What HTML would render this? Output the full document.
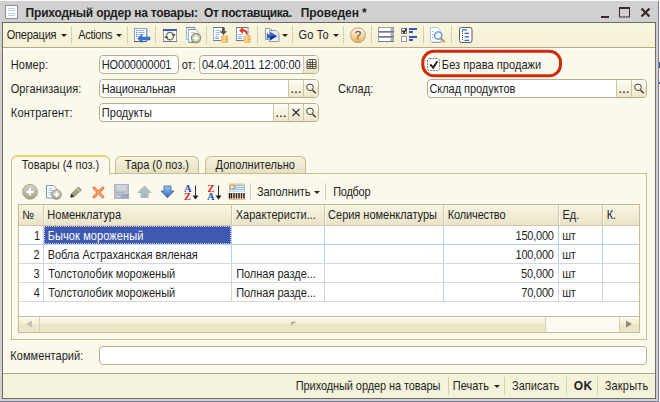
<!DOCTYPE html>
<html><head><meta charset="utf-8">
<style>
html,body{margin:0;padding:0;}
body{width:660px;height:402px;overflow:hidden;position:relative;background:#d0d0d0;font-family:"Liberation Sans",sans-serif;font-size:11px;color:#1e1e1e;}
.a{position:absolute;white-space:nowrap;}
.t{position:absolute;white-space:nowrap;line-height:14px;height:14px;transform-origin:0 11px;transform:scaleY(1.08);}
.inp{position:absolute;background:#fff;border:1px solid #b9ae8c;border-radius:4px;box-sizing:border-box;}
.btn{position:absolute;box-sizing:border-box;border-left:1px solid #cfc6a4;background:linear-gradient(#fffef6,#ece5c8);}
.tab{position:absolute;box-sizing:border-box;border:1px solid #c8bb8c;border-bottom:none;border-radius:6px 6px 0 0;background:linear-gradient(#f6f2dd,#e6e0c4);}
.vl{position:absolute;width:1px;background:#c8d4e4;}
.hl{position:absolute;height:1px;background:#d3d7de;}
.hv{position:absolute;width:1px;top:205px;height:20px;background:#cfc8aa;box-shadow:1px 0 0 #fbf9ee;}
</style></head><body>
<!-- title bar -->
<div class="a" style="left:0;top:0;width:660px;height:1px;background:#fafafa"></div>
<div class="a" style="left:0;top:401px;width:659px;height:1px;background:#7c7c9e"></div>
<div class="a" style="left:658px;top:1px;width:1px;height:401px;background:#7c7c9e"></div>
<div class="a" style="left:659px;top:0;width:1px;height:402px;background:#fbf9e8"></div>
<div class="a" style="left:659px;top:62px;width:1px;height:5px;background:#3a5ac0"></div><div class="a" style="left:659px;top:67px;width:1px;height:1px;background:#4a3c3c"></div><div class="a" style="left:659px;top:82px;width:1px;height:2px;background:#3a5ac0"></div>
<!-- window frame -->
<div class="a" style="left:2px;top:22px;width:654px;height:377px;background:#fbf9ec;border:1px solid #6e6a64;box-sizing:border-box"></div>
<!-- toolbar -->
<div class="a" style="left:3px;top:23px;width:652px;height:25px;background:linear-gradient(#f9f6df,#f5f1d6);border-bottom:1px solid #b4ac80;box-sizing:border-box"></div><div class="a" style="left:3px;top:48px;width:652px;height:2px;background:#fffffa"></div>
<!-- inputs -->
<div class="inp" style="left:99px;top:55px;width:80px;height:19px"></div>
<div class="inp" style="left:199px;top:55px;width:120px;height:19px"></div><div class="btn" style="left:303px;top:56px;width:15px;height:17px;border-radius:0 3px 3px 0"></div>
<div class="inp" style="left:99px;top:79px;width:220px;height:19px"></div><div class="btn" style="left:288px;top:80px;width:15px;height:17px"></div><div class="btn" style="left:303px;top:80px;width:15px;height:17px;border-radius:0 3px 3px 0"></div>
<div class="inp" style="left:99px;top:103px;width:220px;height:19px"></div><div class="btn" style="left:273px;top:104px;width:15px;height:17px"></div><div class="btn" style="left:288px;top:104px;width:15px;height:17px"></div><div class="btn" style="left:303px;top:104px;width:15px;height:17px;border-radius:0 3px 3px 0"></div>
<div class="inp" style="left:427px;top:79px;width:220px;height:19px"></div><div class="btn" style="left:616px;top:80px;width:15px;height:17px"></div><div class="btn" style="left:631px;top:80px;width:15px;height:17px;border-radius:0 3px 3px 0"></div>
<!-- tabs -->
<div class="a" style="left:11px;top:173px;width:636px;height:167px;border:1px solid #c8bb8c;box-sizing:border-box;background:#fbf9ec"></div>
<div class="tab" style="left:115px;top:156px;width:84px;height:17px"></div>
<div class="tab" style="left:205px;top:156px;width:101px;height:17px"></div>
<div class="tab" style="left:11px;top:155px;width:99px;height:19px;background:#fbf9ec;border-top:2px solid #efd070"></div>
<!-- table -->
<div class="a" style="left:18px;top:204px;width:622px;height:129px;border:1px solid #c8bb8c;box-sizing:border-box;background:#fff"></div>
<div class="a" style="left:19px;top:205px;width:620px;height:21px;background:linear-gradient(#f8f5e4,#e9e3c8);border-bottom:1px solid #cfc8aa;box-sizing:border-box"></div>
<div class="hv" style="left:43px"></div><div class="hv" style="left:231px"></div><div class="hv" style="left:324px"></div><div class="hv" style="left:443px"></div><div class="hv" style="left:558px"></div><div class="hv" style="left:602px"></div>
<div class="vl" style="left:43px;top:226px;height:76px;background:#ccd2dc"></div>
<div class="vl" style="left:231px;top:226px;height:76px;background:linear-gradient(#b4d0f0 0,#b4d0f0 37px,#cfd3da 38px,#cfd3da 100%)"></div>
<div class="vl" style="left:324px;top:226px;height:76px;background:linear-gradient(#b4d0f0 0,#b4d0f0 37px,#cfd3da 38px,#cfd3da 100%)"></div>
<div class="vl" style="left:443px;top:226px;height:76px;background:#b4d0f0"></div>
<div class="vl" style="left:558px;top:226px;height:76px;background:linear-gradient(#b4d0f0 0,#b4d0f0 37px,#cfd3da 38px,#cfd3da 100%)"></div>
<div class="vl" style="left:602px;top:226px;height:76px;background:linear-gradient(#b4d0f0 0,#b4d0f0 37px,#cfd3da 38px,#cfd3da 100%)"></div>
<div class="hl" style="left:19px;top:244px;width:620px;background:#b4cff0"></div>
<div class="hl" style="left:19px;top:263px;width:620px"></div>
<div class="hl" style="left:19px;top:282px;width:620px"></div>
<div class="hl" style="left:19px;top:301px;width:620px"></div>
<div class="a" style="left:44px;top:226px;width:187px;height:18px;background:#4059b0;outline:1px dotted #c8d4f0;outline-offset:-1px"></div>
<!-- scrollbar -->
<div class="a" style="left:19px;top:316px;width:620px;height:16px;background:#fbf9f1;border-top:1px solid #c4bc94;box-sizing:border-box"></div>
<div class="a" style="left:39px;top:317px;width:507px;height:15px;background:linear-gradient(#fdfbf6 0,#fdfbf6 2px,#f6f3da 2px,#f6f3da 6px,#ebe6c8 7px,#ebe6c8 100%);border-right:1px solid #d8d1b4;border-left:1px solid #d8d1b4;box-sizing:border-box"></div>
<div class="a" style="left:19px;top:317px;width:20px;height:15px;background:linear-gradient(#fdfbf6 0,#fdfbf6 2px,#f6f3da 2px,#f6f3da 6px,#ebe6c8 7px,#ebe6c8 100%)"></div>
<div class="a" style="left:619px;top:317px;width:20px;height:15px;background:linear-gradient(#fdfbf6 0,#fdfbf6 2px,#f6f3da 2px,#f6f3da 6px,#ebe6c8 7px,#ebe6c8 100%);border-left:1px solid #d8d1b4;box-sizing:border-box"></div>
<!-- comment -->
<div class="inp" style="left:99px;top:346px;width:548px;height:19px"></div>
<!-- bottom bar -->
<div class="a" style="left:3px;top:373px;width:652px;height:25px;background:#f5f2da;border-top:1px solid #b0a87c;box-sizing:border-box"></div>

<div class="t" id="ti1" style="left:25.62px;top:6px;letter-spacing:-0.218px;font-weight:bold;font-size:12px">Приходный ордер на товары:</div>
<div class="t" id="ti2" style="left:204.00px;top:6px;letter-spacing:-0.392px;font-weight:bold;font-size:12px">От поставщика.</div>
<div class="t" id="ti3" style="left:300.84px;top:6px;letter-spacing:-0.089px;font-weight:bold;font-size:12px">Проведен *</div>
<div class="t" id="tb1" style="left:6.64px;top:28px;letter-spacing:-0.191px">Операция</div>
<div class="t" id="tb2" style="left:78.20px;top:28px;letter-spacing:-0.300px">Actions</div>
<div class="t" id="tb3" style="left:298.38px;top:28px;letter-spacing:0.277px">Go To</div>
<div class="t" id="l1" style="left:10.86px;top:58px;letter-spacing:0.046px">Номер:</div>
<div class="t" id="l2" style="left:10.64px;top:82px;letter-spacing:0.124px">Организация:</div>
<div class="t" id="l3" style="left:10.86px;top:106px;letter-spacing:0.184px">Контрагент:</div>
<div class="t" id="l4" style="left:181.67px;top:58px;letter-spacing:-0.015px">от:</div>
<div class="t" id="v1" style="left:101.86px;top:58px;letter-spacing:-0.199px">НО000000001</div>
<div class="t" id="v2" style="left:202.03px;top:58px;letter-spacing:-0.078px">04.04.2011 12:00:00</div>
<div class="t" id="v3" style="left:101.78px;top:82px;letter-spacing:-0.139px">Национальная</div>
<div class="t" id="v4" style="left:101.82px;top:106px;letter-spacing:0.039px">Продукты</div>
<div class="t" id="l5" style="left:338.10px;top:82px;letter-spacing:0.059px">Склад:</div>
<div class="t" id="v5" style="left:429.44px;top:82px;letter-spacing:-0.045px">Склад продуктов</div>
<div class="t" id="c1" style="left:441.85px;top:58px;letter-spacing:0.065px">Без права продажи</div>
<div class="t" id="p1" style="left:21.66px;top:158px;letter-spacing:0.012px">Товары (4 поз.)</div>
<div class="t" id="p2" style="left:124.66px;top:158px;letter-spacing:0.010px">Тара (0 поз.)</div>
<div class="t" id="p3" style="left:215.60px;top:158px;letter-spacing:0.012px">Дополнительно</div>
<div class="t" id="f1" style="left:256.98px;top:185px;letter-spacing:-0.053px">Заполнить</div>
<div class="t" id="f2" style="left:333.17px;top:185px;letter-spacing:-0.276px">Подбор</div>
<div class="t" id="h1" style="left:22.32px;top:208px;letter-spacing:0.000px">№</div>
<div class="t" id="h2" style="left:47.34px;top:208px;letter-spacing:-0.007px">Номенклатура</div>
<div class="t" id="h3" style="left:235.66px;top:208px;letter-spacing:0.034px">Характеристи...</div>
<div class="t" id="h4" style="left:328.10px;top:208px;letter-spacing:-0.012px">Серия номенклатуры</div>
<div class="t" id="h5" style="left:447.85px;top:208px;letter-spacing:-0.158px">Количество</div>
<div class="t" id="h6" style="left:562.48px;top:208px;letter-spacing:0.050px">Ед.</div>
<div class="t" id="h7" style="left:606.83px;top:208px;letter-spacing:-0.180px">К.</div>
<div class="t" id="r1n" style="left:34.08px;top:228.7px;letter-spacing:0.000px">1</div>
<div class="t" id="r2n" style="left:33.50px;top:247.7px;letter-spacing:0.000px">2</div>
<div class="t" id="r3n" style="left:33.40px;top:266.7px;letter-spacing:0.000px">3</div>
<div class="t" id="r4n" style="left:33.80px;top:285.7px;letter-spacing:0.000px">4</div>
<div class="t" id="r1a" style="left:47.66px;top:228.7px;letter-spacing:0.106px;color:#fff">Бычок мороженый</div>
<div class="t" id="r2a" style="left:47.66px;top:247.7px;letter-spacing:-0.017px">Вобла Астраханская вяленая</div>
<div class="t" id="r3a" style="left:48.34px;top:266.7px;letter-spacing:0.006px">Толстолобик мороженый</div>
<div class="t" id="r4a" style="left:48.34px;top:285.7px;letter-spacing:0.006px">Толстолобик мороженый</div>
<div class="t" id="r3b" style="left:236.14px;top:266.7px;letter-spacing:-0.021px">Полная разде...</div>
<div class="t" id="r4b" style="left:236.14px;top:285.7px;letter-spacing:-0.021px">Полная разде...</div>
<div class="t" id="r1q" style="left:515.52px;top:228.7px;letter-spacing:-0.216px">150,000</div>
<div class="t" id="r2q" style="left:515.52px;top:247.7px;letter-spacing:-0.216px">100,000</div>
<div class="t" id="r3q" style="left:521.08px;top:266.7px;letter-spacing:-0.149px">50,000</div>
<div class="t" id="r4q" style="left:521.24px;top:285.7px;letter-spacing:-0.187px">70,000</div>
<div class="t" id="r1u" style="left:562.14px;top:228.7px;letter-spacing:-0.100px">шт</div>
<div class="t" id="r2u" style="left:562.14px;top:247.7px;letter-spacing:-0.100px">шт</div>
<div class="t" id="r3u" style="left:562.14px;top:266.7px;letter-spacing:-0.100px">шт</div>
<div class="t" id="r4u" style="left:562.14px;top:285.7px;letter-spacing:-0.100px">шт</div>
<div class="t" id="cm" style="left:10.30px;top:349px;letter-spacing:0.065px">Комментарий:</div>
<div class="t" id="b1" style="left:295.79px;top:379px;letter-spacing:-0.094px">Приходный ордер на товары</div>
<div class="t" id="b2" style="left:452.85px;top:379px;letter-spacing:-0.002px">Печать</div>
<div class="t" id="b3" style="left:512.00px;top:379px;letter-spacing:0.038px">Записать</div>
<div class="t" id="b4" style="left:573.64px;top:379px;letter-spacing:0.495px;font-weight:bold;font-size:12px">OK</div>
<div class="t" id="b5" style="left:604.75px;top:379px;letter-spacing:0.181px">Закрыть</div>
<svg class="a" style="left:0;top:0" width="660" height="402" viewBox="0 0 660 402">
<defs>
<linearGradient id="gHelp" x1="0" y1="0" x2="0" y2="1"><stop offset="0" stop-color="#fdf8e6"/><stop offset="0.45" stop-color="#f9e2b4"/><stop offset="1" stop-color="#f0a448"/></linearGradient>
<linearGradient id="gCoin" x1="0" y1="0" x2="1" y2="0"><stop offset="0" stop-color="#f2a53c"/><stop offset="0.5" stop-color="#fbd27a"/><stop offset="1" stop-color="#e88a28"/></linearGradient>
<linearGradient id="gBlue" x1="0" y1="0" x2="0" y2="1"><stop offset="0" stop-color="#9cc6f2"/><stop offset="1" stop-color="#2f62c4"/></linearGradient>
<linearGradient id="gPlus" x1="0" y1="0" x2="0" y2="1"><stop offset="0" stop-color="#d6d5c6"/><stop offset="1" stop-color="#a3a288"/></linearGradient>
<linearGradient id="gArr" x1="0" y1="0" x2="0" y2="1"><stop offset="0" stop-color="#5a78c8"/><stop offset="0.5" stop-color="#2a2a30"/><stop offset="1" stop-color="#1a1a1a"/></linearGradient>
</defs>
<!-- title icon -->
<g id="ic-title"><rect x="5.5" y="5.5" width="12" height="13" fill="#fdfdfd" stroke="#8a8ea8"/><path d="M8 8.5h7M8 10.5h7M8 13.5h7M8 15.5h7" stroke="#b9cde6" stroke-width="1"/></g>
<!-- window buttons -->
<g id="ic-win" fill="none" stroke="#3a2826"><rect x="601" y="16" width="8" height="2" fill="#3a2826" stroke="none"/><rect x="619.5" y="8" width="10" height="9"/><rect x="619" y="7" width="11" height="2" fill="#3a2826" stroke="none"/><path d="M641.5 8.5l8 8M649.5 8.5l-8 8" stroke-width="2.2"/></g>
<!-- toolbar dropdown arrows -->
<g fill="#2a2220"><path d="M61 34h6l-3 3z"/><path d="M116 34h6l-3 3z"/><path d="M282 34h6l-3 3z"/><path d="M333 34h6l-3 3z"/><path d="M314 191h6l-3 3z"/><path d="M494 385h6l-3 3z"/></g>
<!-- toolbar separators -->
<g stroke="#d6cfb0" stroke-width="1"><path d="M71.500 26v18M127.500 26v18M155.500 26v18M206.500 26v18M257.500 26v18M292.500 26v18M343.500 26v18M371.500 26v18M423.500 26v18M451.500 26v18"/><path d="M250.500 183v17M325.500 183v17"/><path d="M448.500 377v18M504.500 377v18M566.500 377v18M597.500 377v18"/></g>
<!-- icon1: doc with left arrow -->
<g id="ic1"><rect x="134.500" y="28.500" width="12" height="13" fill="#fff" stroke="#7f9fd8"/><path d="M134 41.500h13" stroke="#55565e"/><path d="M147 29v12" stroke="#8a8f9c" stroke-width="0.800"/><path d="M138.500 30.500h6M138.500 32.500h6M138.500 34.500h6M138.500 36.500h3" stroke="#8fb0e6"/><path d="M136 30h1.200v1h-1.200zM136 32h1.200v1h-1.200zM136 34h1.200v1h-1.200zM136 36h1.200v1h-1.200z" fill="#4a6fc0"/><path d="M137.500 38.500l4.500-4v2.500h8v3h-8v2.500z" fill="#3b74dc" stroke="#2a58b8" stroke-width="0.500"/></g>
<!-- icon2: window refresh -->
<g id="ic2"><rect x="163.500" y="29.500" width="13" height="12" fill="#fdfdf8" stroke="#9a9a9e"/><path d="M163 41.500h14" stroke="#77777c"/><rect x="163" y="29" width="14" height="2" fill="#3f5cae"/><path d="M166.400 35.300a3.700 3.700 0 0 1 6.900-1" fill="none" stroke="#5b5b4e" stroke-width="1.100"/><path d="M173.600 36.900a3.700 3.700 0 0 1-6.900 1" fill="none" stroke="#5b5b4e" stroke-width="1.100"/><path d="M171.400 34.200h4.400l-2.200 2.700zM164.200 38h4.400l-2.200-2.700z" fill="#4a4a40"/></g>
<!-- icon3: copy docs plus -->
<g id="ic3"><path d="M186.500 27.500h8.500v12h-8.500z" fill="#fdfeff" stroke="#8fb0e2"/><path d="M186 27.500h9" stroke="#7c8290"/><path d="M188.500 29.500h7l3 3v9.500h-10z" fill="#fdfeff" stroke="#8fb0e2"/><path d="M188 29.500h7.500" stroke="#7c8290"/><path d="M191 32.500h4" stroke="#c0cde4"/><path d="M188.500 42.500h6" stroke="#8a8c92"/><circle cx="196" cy="38" r="4.600" fill="#c4ccb0" stroke="#8f8f70" stroke-width="1.200"/><path d="M193.500 38h5M196 35.500v5" stroke="#fff" stroke-width="1.800"/></g>
<!-- icon4: doc post -->
<g id="ic4"><rect x="213.500" y="27.500" width="10" height="13" fill="#fff" stroke="#8fb0e2"/><path d="M213 27.500h11M213 40.500h8" stroke="#6f7684"/><path d="M215.500 30.500h5M215.500 32.500h5M215.500 34.500h4M215.500 36.500h3" stroke="#aab8d4"/><rect x="215" y="37.600" width="4" height="1.400" fill="#7fb0ea"/><path d="M222 27.500h2.800v3.700h2.400l-3.800 3.600-3.800-3.600h2.400z" fill="#55524e"/><rect x="221" y="35.500" width="6.800" height="7.200" rx="1.400" fill="url(#gCoin)"/><path d="M221 37.900h6.800M221 40.300h6.800" stroke="#fde9b8" stroke-width="0.700"/></g>
<!-- icon5: doc unpost -->
<g id="ic5"><rect x="236.500" y="27.500" width="11.500" height="13" fill="#fff" stroke="#6f94d8"/><path d="M236 27.500h12.500M236 40.500h8" stroke="#6f7684"/><path d="M238.500 34.500h4M238.500 36.500h4" stroke="#aab8d4"/><rect x="238" y="37.600" width="4" height="1.400" fill="#7fb0ea"/><path d="M239 30.500l4-3.600v2.300c3.200 0 4.800 1.800 4.800 5.300h-1.900c0-1.900-0.900-2.900-2.900-2.900v2.400z" fill="#e23a22"/><rect x="243.600" y="35.500" width="6.800" height="7.200" rx="1.400" fill="url(#gCoin)"/><path d="M243.600 37.900h6.800M243.600 40.300h6.800" stroke="#fde9b8" stroke-width="0.700"/></g>
<!-- icon6: docs arrow -->
<g id="ic6"><path d="M265.500 28.500h5l2 2v9h-7z" fill="#f6f7fa" stroke="#9a9ca4"/><path d="M269.500 30.500h6.500l3 3v8h-9.500z" fill="#eceef6" stroke="#9a9ca4"/><path d="M266.800 33l3.400 2.200v-3.500l7 4.300-7 4.300v-3.100l-3.400 2z" fill="#2f62d0"/><path d="M270.200 36.600l7-0.600-7 4.300v-3.100z" fill="#1c2f7c"/></g>
<!-- help -->
<g id="ic-help"><circle cx="358" cy="35.200" r="7.400" fill="url(#gHelp)" stroke="#b4a482" stroke-width="1"/><text x="358" y="39.300" font-family="Liberation Sans, sans-serif" font-size="11.500" text-anchor="middle" fill="#6a6058" stroke="#6a6058" stroke-width="0.300">?</text></g>
<!-- list icon -->
<g id="ic-list" fill="#fff" stroke="#9a9aae"><rect x="378.500" y="27.500" width="15" height="4"/><rect x="378.500" y="32.500" width="15" height="4"/><rect x="378.500" y="37.500" width="15" height="4"/><path d="M390.500 28h3v3.500h-3zM390.500 33h3v3.500h-3zM390.500 38h3v3.500h-3z" fill="#b4b4b4" stroke="none"/><path d="M378 31.500h16M378 36.500h16M378 41.500h16" stroke="#78788c"/></g>
<!-- checklist icon -->
<g id="ic-chk"><rect x="401.500" y="28.500" width="5" height="5" fill="#fff" stroke="#7c7c7c"/><path d="M402.500 30.500l1.500 2 2.500-4" fill="none" stroke="#111" stroke-width="1.300"/><rect x="401.500" y="36.500" width="5" height="5" fill="#fff" stroke="#9a9a9a"/><path d="M409 28h8v2h-8zM409 31h4v2h-4zM409 36h8v2h-8zM409 39h4v2h-4z" fill="#2f55c0"/></g>
<!-- doc magnifier -->
<g id="ic-find"><path d="M430.500 27.500h7l3.500 3.500v11h-10.500z" fill="#fdfeff" stroke="#b4c6e2"/><path d="M432.500 42.500h9" fill="none" stroke="#9aa4b8"/><path d="M432 31h1v1h-1zM432 34h1v1h-1zM432 37h1v1h-1z" fill="#7c98cc"/><circle cx="438.200" cy="35.500" r="3.700" fill="#f4f9ff" fill-opacity="0.850" stroke="#4a8ce0" stroke-width="1.300"/><path d="M441 38.500l3.600 3.600" stroke="#cc8238" stroke-width="1.800"/></g>
<!-- tree icon -->
<g id="ic-tree"><rect x="459.500" y="27.500" width="12.500" height="15" rx="2" fill="#fff" stroke="#5a5a66" stroke-width="1"/><path d="M462.500 31v10" stroke="#444" stroke-dasharray="1 1"/><path d="M462 29.200h5v1.300h-5zM464.500 32.700h4.500v1.300h-4.500zM464.500 36.200h4.500v1.300h-4.500zM464.500 39.700h4.500v1.300h-4.500z" fill="#3a60c8"/></g>
<!-- calendar button glyph -->
<g id="ic-cal" stroke="#4a4236" fill="none" stroke-width="0.900"><path d="M308.500 59.500h7.500v9h-9v-7.500z M307 62.500h9M307 64.500h9M307 66.500h9M310 60.500v8M312.500 59.500v9"/></g>
<!-- magnifiers -->
<g id="ic-mag" fill="none" stroke="#4a4236"><circle cx="310" cy="87.3" r="3.300" stroke-width="1"/><path d="M312.5 90l3.300 3.300" stroke-width="1.600"/><circle cx="310" cy="111.3" r="3.300" stroke-width="1"/><path d="M312.5 114l3.300 3.300" stroke-width="1.600"/><circle cx="638" cy="87.3" r="3.300" stroke-width="1"/><path d="M640.5 90l3.300 3.300" stroke-width="1.600"/></g>
<!-- dots -->
<g id="ic-dots" fill="#3a342c"><path d="M291.500 91.500h1.600v1.600h-1.600zM295.200 91.500h1.600v1.600h-1.600zM298.900 91.500h1.600v1.600h-1.600z"/><path d="M276.500 115.500h1.600v1.600h-1.600zM280.200 115.500h1.600v1.600h-1.600zM283.900 115.500h1.600v1.600h-1.600z"/><path d="M619.500 91.500h1.600v1.600h-1.600zM623.200 91.500h1.600v1.600h-1.600zM626.900 91.500h1.600v1.600h-1.600z"/></g>
<path d="M292.500 109l7 7M299.500 109l-7 7" stroke="#3a342c" stroke-width="1.300" fill="none"/>
<!-- checkbox + red oval -->
<rect x="422.800" y="51.300" width="137.700" height="24.400" rx="11" fill="none" stroke="#d02a0c" stroke-width="3"/>
<rect x="427.500" y="58.500" width="12" height="12" rx="2" fill="#fff" stroke="#77778c" stroke-dasharray="2 1"/>
<path d="M430.200 64.300l3 3.300 4.200-6.400" fill="none" stroke="#2a2020" stroke-width="1.900"/>
<!-- table toolbar icons -->
<g id="tb1"><circle cx="30" cy="191.800" r="7.400" fill="url(#gPlus)" stroke="#9a9980" stroke-width="0.800"/><path d="M26.300 191.800h7.400M30 188.100v7.400" stroke="#fff" stroke-width="2.200"/></g>
<g id="tb2"><path d="M46.500 185.500h7l3 3v9.500h-10z" fill="#fff" stroke="#7a94c8"/><path d="M48.500 188.500h4M48.500 190.500h5M48.500 192.500h4M48.500 194.500h3" stroke="#a8bee4"/><circle cx="56.500" cy="194.500" r="4.800" fill="url(#gPlus)" stroke="#86866a" stroke-width="0.800"/><path d="M53.800 194.500h5.400M56.500 191.800v5.400" stroke="#fff" stroke-width="1.800"/></g>
<g id="tb3"><path d="M70.500 197.500l1-4 7-6.500 3 3-7 6.500z" fill="#a0a084" stroke="#7d7d64" stroke-width="0.600"/><path d="M70.500 197.500l1-3.500 2.500 2.500z" fill="#2a2a24"/><path d="M76.500 188.500l3 3" stroke="#deded0" stroke-width="1"/></g>
<g id="tb4"><path d="M94 188l9 9M103 188l-9 9" stroke="#ea5a28" stroke-width="2.800" stroke-linecap="round"/><path d="M94 188l9 9M103 188l-9 9" stroke="#f9b070" stroke-width="1.300" stroke-linecap="round"/></g>
<g id="tb5"><rect x="114.500" y="184.500" width="14" height="14" fill="#c2c4c8" stroke="#aab4c6"/><rect x="117" y="185" width="9" height="5" fill="#d2d6de"/><path d="M116 192.500h8M116 194.500h4" stroke="#9cb0d0"/><text x="120.500" y="198.300" font-family="Liberation Sans, sans-serif" font-weight="bold" font-size="7.500" fill="#7c98c4">ок</text></g>
<g id="tb6"><path d="M144.500 186l6.500 6.500h-3v5h-7v-5h-3z" fill="#b9bcb4" stroke="#9cb4d4" stroke-width="0.900"/><path d="M143 195h3" stroke="#8aa6d0"/></g>
<g id="tb7"><path d="M164 186h7v5h3l-6.500 6.800-6.500-6.800h3z" fill="url(#gBlue)" stroke="#3c5c9c" stroke-width="0.800"/></g>
<g id="tb8" font-family="Liberation Serif, serif" font-weight="bold" font-size="10.500"><text x="184" y="191.500" fill="#2c4cb4">A</text><text x="184" y="199.700" fill="#d42818">Z</text><path d="M195.500 185v12" stroke="url(#gArr)" stroke-width="1.200"/><path d="M192.500 195.500h6l-3 4z" fill="#1a1a1a"/><path d="M195.500 185.500v11" stroke="#2a2a3a" stroke-width="1"/></g>
<g id="tb9" font-family="Liberation Serif, serif" font-weight="bold" font-size="10.500"><text x="207.500" y="191.500" fill="#d42818">Z</text><text x="207" y="199.700" fill="#2c4cb4">A</text><path d="M215.500 195.500h6l-3 4z" fill="#1a1a1a"/><path d="M218.500 185.500v11" stroke="#2a2a3a" stroke-width="1"/></g>
<g id="tb10"><rect x="229" y="184.500" width="16" height="7" fill="#9cc0ea"/><path d="M236 186.500h8M236 188.500h8M230 190.500h14" stroke="#dcecfb"/><path d="M229 184h16" stroke="#f0c060"/><path d="M232 184v6M229 187h6M230 185l4 4M234 185l-4 4" stroke="#f6a21e" stroke-width="0.900"/><circle cx="232" cy="187" r="1.200" fill="#fff6c0"/><path d="M229.500 193v5.500M231.500 193v5.500M234 193v5.500M236.500 193v5.500M239 193v5.500M241.500 193v5.500M244 193v5.500" stroke="#2a1a14" stroke-width="1.500"/><path d="M229 199.500h16" stroke="#f0c060"/></g>
<!-- scrollbar arrows -->
<path d="M32 320.500v7l-6-3.500z" fill="#c4c0b2"/><path d="M626 320.500v7l6-3.500z" fill="#8e8a7c"/>
<path d="M292 325.500v-3h3.500" fill="none" stroke="#a4a492" stroke-width="1.400"/>
</svg>
</body></html>
